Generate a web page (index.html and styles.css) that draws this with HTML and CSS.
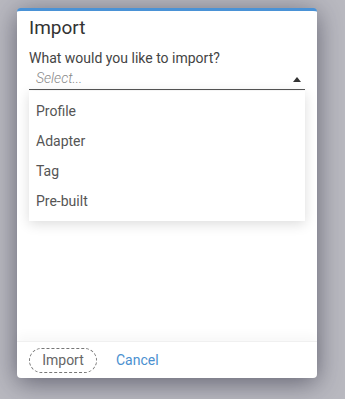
FILE: index.html
```html
<!DOCTYPE html>
<html lang="en">
<head>
  <meta charset="UTF-8" />
  <meta name="viewport" content="width=device-width, initial-scale=1.0">
  <title>Import</title>
  <link rel="stylesheet" href="styles.css">
</head>
<body>

  <!-- 匯入對話框 -->
  <div class="dialog">
    <div class="dialog-body">
      <h2 class="dialog-title">Import</h2>
      <label class="field-label">What would you like to import?</label>
      <div class="select">
        <span class="select-value">Select...</span>
        <span class="select-arrow"></span>
        <ul class="select-menu">
          <li>Profile</li>
          <li>Adapter</li>
          <li>Tag</li>
          <li>Pre-built</li>
        </ul>
      </div>
    </div>

    <div class="dialog-footer">
      <button class="btn-import">Import</button>
      <a href="#" class="btn-cancel">Cancel</a>
    </div>
  </div>

</body>
</html>
```

FILE: styles.css
```css
/* Reset & 基本樣式 */
* {
  box-sizing: border-box;
}
html, body {
  height: 100%;
  overflow: hidden;
}
body {
  font-family: Roboto, "Liberation Sans", sans-serif;
  background: #b9b9c0;
  margin: 0;
  padding: 8px 0 0 17px;
  color: #333;
}

/* 對話框 */
.dialog {
  width: 300px;
  height: 370px;
  background-color: #fff;
  border-top: 3px solid #4a92d6;
  border-radius: 4px;
  box-shadow: 0 5px 26px rgba(30, 30, 50, 0.55);
  display: flex;
  flex-direction: column;
}
.dialog-body {
  flex: 1;
  padding: 5px 12px 0 12px;
}
.dialog-title {
  font-size: 19px;
  font-weight: 400;
  color: #333;
  margin: 0 0 9px 0;
  line-height: 24px;
}
.field-label {
  display: block;
  font-size: 14px;
  color: #444;
  line-height: 18px;
}

/* 下拉選單 */
.select {
  position: relative;
  height: 22px;
  border-bottom: 1px solid #555;
  margin-top: 1px;
}
.select-value {
  display: block;
  padding-left: 7px;
  font-size: 14px;
  font-style: italic;
  font-weight: 300;
  color: #888;
  line-height: 21px;
}
.select-arrow {
  position: absolute;
  right: 4px;
  top: 9px;
  width: 0;
  height: 0;
  border-left: 4px solid transparent;
  border-right: 4px solid transparent;
  border-bottom: 5px solid #333;
}
.select-menu {
  position: absolute;
  top: 23px;
  left: 0;
  right: 0;
  list-style: none;
  margin: 0;
  padding: 5px 0;
  background-color: #fff;
  box-shadow: 0 3px 12px rgba(0, 0, 0, 0.14);
  z-index: 10;
}
.select-menu li {
  height: 30px;
  line-height: 30px;
  padding-left: 7px;
  font-size: 14px;
  color: #555;
}

/* footer */
.dialog-footer {
  height: 37px;
  display: flex;
  align-items: center;
  gap: 19px;
  padding: 0 12px;
  border-top: 1px solid #f0f0f0;
  box-shadow: 0 -6px 10px rgba(0, 0, 0, 0.03);
}
.btn-import {
  font-family: inherit;
  font-size: 14px;
  color: #666;
  background: transparent;
  border: 1px dashed #777;
  border-radius: 13px;
  width: 68px;
  height: 25px;
  padding: 0;
}
.btn-cancel {
  font-size: 14px;
  color: #4a90d0;
  text-decoration: none;
}
```
